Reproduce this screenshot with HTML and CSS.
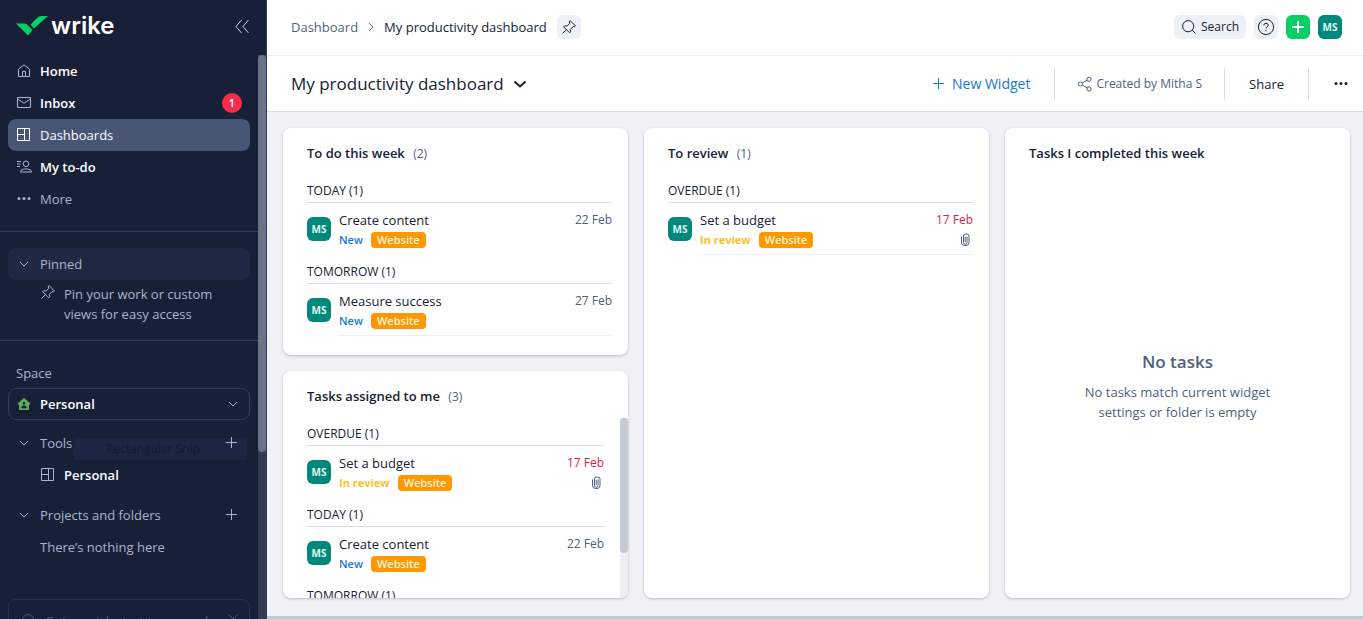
FILE: index.html
```html
<!DOCTYPE html>
<html lang="en">
<head>
<meta charset="utf-8">
<title>My productivity dashboard</title>
<link rel="stylesheet" href="styles.css">
</head>
<body>
<svg class="sprite" aria-hidden="true">
  <symbol id="chevron" viewBox="0 0 16 16"><path d="M4 6l4 4 4-4"/></symbol>
  <symbol id="chevron-bold" viewBox="0 0 16 16"><path d="M2.500 5.500l5.500 5 5.500-5"/></symbol>
  <symbol id="plus" viewBox="0 0 16 16"><path d="M7.500 2v11M2 7.500h11"/></symbol>
  <symbol id="plus-bold" viewBox="0 0 16 16"><path d="M8 2v12M2 8h12"/></symbol>
  <symbol id="board" viewBox="0 0 16 16"><path d="M1.500 1.500h12v12h-12zM8.500 1.500v12M1.500 7.500h7"/></symbol>
  <symbol id="pin" viewBox="0 0 16 16"><path d="M9 1.500L14.500 7l-1.200.9-1.200-.3-2.700 2.700.2 2.500-1 1-6-6 1-1 2.500.2 2.700-2.700-.6-1.500zM5.400 10.600L1.500 14.500"/></symbol>
  <symbol id="dots" viewBox="0 0 16 16"><g fill="currentColor" stroke="none"><circle cx="3" cy="7.500" r="1.500"/><circle cx="8" cy="7.500" r="1.500"/><circle cx="13" cy="7.500" r="1.500"/></g></symbol>
  <symbol id="search" viewBox="0 0 16 16"><circle cx="7.200" cy="7.200" r="5.600"/><path d="M11.200 11.200l3.300 3.300"/></symbol>
  <symbol id="clip" viewBox="0 0 16 16"><path d="M10 4.500v6a1.500 1.500 0 0 1-3.500 0V4a2 2 0 0 1 1.700-2h1.600a2.200 2.200 0 0 1 2.200 2v6.500a3 3 0 0 1-3 3h-1.500a3 3 0 0 1-3-3V4.500M8.200 5v5"/></symbol>
</svg>
<div class="app">
  <aside class="sidebar">
    <header class="brand">
      <a class="logo" href="#" aria-label="wrike">
        <svg class="logo-mark" viewBox="0 0 32 20"><path d="M0 7.500h8.500q1.500 0 2.500 1l5.500 5.500-4.500 5.500zM14.500 8.500L21 2Q23 0 25.500 0H32L18 12.500z"/></svg>
        <span>wrike</span>
      </a>
      <button class="collapse" aria-label="Collapse sidebar"><svg viewBox="0 0 16 16"><path d="M7.500 1L2 7.500 7.500 14M14.500 1L9 7.500l5.500 6.500"/></svg></button>
    </header>
    <div class="side-body">
      <div class="side-scroll">
        <nav class="nav">
          <a class="row strong" href="#"><svg viewBox="0 0 16 16"><path d="M2.500 13.500V6L8 2l5.500 4v7.500zM6.500 13.500v-5h3v5"/></svg>Home</a>
          <a class="row strong" href="#"><svg viewBox="0 0 16 16"><path d="M1.500 2.500h13v10h-13zM1.500 4L8 8.200 14.500 4"/></svg>Inbox<span class="count">1</span></a>
          <a class="row active" href="#"><svg><use href="#board"/></svg>Dashboards</a>
          <a class="row strong" href="#"><svg viewBox="0 0 16 16"><circle cx="10" cy="4.800" r="2.800"/><path d="M4.500 13q.5-3 4-3h3q3.500 0 4 3zM1 2.500h4M1 5h3.500M1 7.500h3"/></svg>My to-do</a>
          <a class="row" href="#"><svg><use href="#dots"/></svg>More</a>
        </nav>
        <section class="pinned">
          <button class="row pinned-head"><svg><use href="#chevron"/></svg>Pinned</button>
          <p class="pin-note"><svg><use href="#pin"/></svg><span>Pin your work or custom<br>views for easy access</span></p>
        </section>
        <section class="space">
          <h2>Space</h2>
          <button class="row strong picker"><svg class="house" viewBox="0 0 16 16"><path class="roof" d="M8 2l6.500 5.500-.8 1H13v5.500H3V8.500h-.7l-.8-1z"/><path class="person" d="M6.700 7.300a1.300 1.300 0 1 0 2.600 0 1.300 1.300 0 1 0-2.600 0M5.300 12.300q0-2.800 2.700-2.800t2.700 2.800z"/></svg>Personal<svg class="end"><use href="#chevron"/></svg></button>
          <div class="row tools"><svg><use href="#chevron"/></svg>Tools
            <span class="ghost" aria-hidden="true">Rectangular Snip</span>
            <button class="add" aria-label="Add tool"><svg><use href="#plus"/></svg></button></div>
          <a class="row strong nested" href="#"><svg><use href="#board"/></svg>Personal</a>
          <div class="row projects"><svg><use href="#chevron"/></svg>Projects and folders
            <button class="add" aria-label="Add project"><svg><use href="#plus"/></svg></button></div>
          <p class="row empty-row">There’s nothing here</p>
        </section>
        <div class="tip"><svg><use href="#search"/></svg><span>Get a quick start to expand</span><button aria-label="Dismiss"><svg viewBox="0 0 16 16"><path d="M3.500 1.500l9 9M12.500 1.500l-9 9"/></svg></button></div>
      </div>
      <div class="side-track"><div class="side-thumb"></div></div>
    </div>
  </aside>
  <main class="main">
    <header class="topbar">
      <nav class="crumbs"><a href="#">Dashboard</a><svg class="sep"><use href="#chevron"/></svg><span>My productivity dashboard</span></nav>
      <button class="chip" aria-label="Pin"><svg><use href="#pin"/></svg></button>
      <div class="top-actions">
        <button class="chip search"><svg><use href="#search"/></svg>Search</button>
        <button class="chip help" aria-label="Help"><svg viewBox="0 0 18 18"><circle cx="9" cy="9" r="7.600"/><path d="M6.800 7.300q0-2 2.200-2t2.200 1.800q0 1.200-1.200 1.800-1 .5-1 1.500M9 12v1.300"/></svg></button>
        <button class="chip create" aria-label="Create"><svg><use href="#plus-bold"/></svg></button>
        <button class="avatar">MS</button>
      </div>
    </header>
    <header class="titlebar">
      <h1>My productivity dashboard</h1>
      <button class="title-menu" aria-label="Dashboard menu"><svg><use href="#chevron-bold"/></svg></button>
      <div class="tools-right">
        <button class="new-widget"><svg><use href="#plus"/></svg>New Widget</button>
        <button class="created"><svg viewBox="0 0 16 16"><circle cx="3.300" cy="8" r="2.100"/><circle cx="12" cy="3.300" r="2.100"/><circle cx="12" cy="13" r="2.100"/><path d="M5.200 7l5-2.800M5.200 9l5 3"/></svg>Created by Mitha S</button>
        <button class="share">Share</button>
        <button class="more" aria-label="More"><svg><use href="#dots"/></svg></button>
      </div>
    </header>
    <div class="board">
      <div class="column">
        <section class="card">
          <h2>To do this week <small>(2)</small></h2>
          <h3>TODAY (1)</h3>
          <article class="task"><span class="avatar">MS</span><div class="info"><div class="line"><span class="name">Create content</span><time>22 Feb</time></div><div class="line"><b class="new">New</b><span class="tag">Website</span></div></div></article>
          <h3>TOMORROW (1)</h3>
          <article class="task ruled"><span class="avatar">MS</span><div class="info"><div class="line"><span class="name">Measure success</span><time>27 Feb</time></div><div class="line"><b class="new">New</b><span class="tag">Website</span></div></div></article>
        </section>
        <section class="card assigned">
          <h2>Tasks assigned to me <small>(3)</small></h2>
          <div class="scroll">
            <div class="list">
              <h3>OVERDUE (1)</h3>
              <article class="task"><span class="avatar">MS</span><div class="info"><div class="line"><span class="name">Set a budget</span><time class="late">17 Feb</time></div><div class="line"><b class="review">In review</b><span class="tag">Website</span><svg class="clip"><use href="#clip"/></svg></div></div></article>
              <h3>TODAY (1)</h3>
              <article class="task"><span class="avatar">MS</span><div class="info"><div class="line"><span class="name">Create content</span><time>22 Feb</time></div><div class="line"><b class="new">New</b><span class="tag">Website</span></div></div></article>
              <h3>TOMORROW (1)</h3>
            </div>
            <div class="track"><div class="thumb"></div></div>
          </div>
        </section>
      </div>
      <section class="card">
        <h2>To review <small>(1)</small></h2>
        <h3>OVERDUE (1)</h3>
        <article class="task ruled"><span class="avatar">MS</span><div class="info"><div class="line"><span class="name">Set a budget</span><time class="late">17 Feb</time></div><div class="line"><b class="review">In review</b><span class="tag">Website</span><svg class="clip"><use href="#clip"/></svg></div></div></article>
      </section>
      <section class="card">
        <h2>Tasks I completed this week</h2>
        <div class="none"><strong>No tasks</strong><p>No tasks match current widget<br>settings or folder is empty</p></div>
      </section>
    </div>
    <div class="h-scroll"></div>
  </main>
</div>
</body>
</html>
```
FILE: styles.css
```css
* { box-sizing: border-box; }
body, h1, h2, h3, p { margin: 0; }
body { font: 13px/20px "Open Sans", "Noto Sans", sans-serif; color: #162136; }
button { font: inherit; color: inherit; background: none; border: 0; padding: 0; display: flex; align-items: center; justify-content: center; cursor: pointer; }
a { color: inherit; text-decoration: none; }
svg { width: 16px; height: 16px; flex: none; fill: none; stroke: currentColor; }
.sprite { display: none; }
.app { display: flex; height: 100vh; overflow: hidden; }

/* Sidebar */
.sidebar { width: 267px; flex: none; display: flex; flex-direction: column; background: #182038; color: #a9b4cd; border-right: 1px solid #2b3d6b; }
.brand { height: 55px; flex: none; display: flex; align-items: center; justify-content: space-between; padding: 0 16px 2px; }
.logo { display: flex; align-items: center; gap: 3px; color: #fff; font: 600 24px/32px "Inter", sans-serif; padding-bottom: 2px; }
.logo-mark { width: 32px; height: 20px; fill: #08cf65; stroke: none; }
.collapse { color: #c5cde0; }
.side-body { flex: 1; min-height: 0; display: flex; }
.side-scroll { flex: 1; min-width: 0; overflow: hidden; }
.side-track { width: 8px; background: #343b52; }
.side-thumb { height: 397px; border-radius: 4px; background: #6b7385; }
.nav { padding: 0 8px 16px; border-bottom: 1px solid #30405f; }
.row { display: flex; align-items: center; gap: 8px; width: 100%; height: 32px; padding: 0 8px; border-radius: 8px; justify-content: flex-start; position: relative; }
.strong { color: #fff; font-weight: 600; }
.row svg { color: #a9b4cd; }
.active { background: #475674; color: #fff; }
.active svg { color: #fff; }
.count { width: 20px; height: 20px; margin-left: auto; border-radius: 50%; background: #f62d4a; font-size: 11px; text-align: center; }
.pinned { padding: 16px 8px; border-bottom: 1px solid #30405f; }
.pinned-head { background: #202843; }
.pin-note { display: flex; gap: 8px; padding: 4px 0 0 32px; }
.space { padding: 22px 8px 36px; }
.space h2 { font: inherit; padding: 0 8px; margin-bottom: 5px; }
.picker { border: 1px solid #30405f; padding: 0 8px 0 7px; }
.row .end { margin-left: auto; }
.house { stroke: none; }
.roof { fill: #58ad5c; }
.person { fill: #182038; }
.tools { margin-top: 7px; }
.add { margin-left: auto; padding-right: 2px; position: relative; }
.ghost { position: absolute; left: 66px; right: 3px; top: 11px; height: 22px; padding-left: 32px; line-height: 22px; background: #1c2542; color: #121a2e; font-size: 12px; }
.nested { padding-left: 32px; }
.projects { margin-top: 8px; }
.empty-row { padding-left: 32px; }
.tip { display: flex; align-items: center; gap: 8px; height: 44px; margin: 0 8px; padding: 0 8px 0 12px; border: 1px solid #283551; border-radius: 8px; color: #4c566e; white-space: nowrap; }
.tip span { flex: 1; }

/* Header bars */
.main { flex: 1; min-width: 0; display: flex; flex-direction: column; background: #f0f1f5; }
.topbar { height: 56px; flex: none; display: flex; align-items: center; gap: 10px; padding: 0 21px 2px 24px; background: #fff; border-bottom: 1px solid #ebedf0; }
.crumbs { display: flex; align-items: center; gap: 5px; }
.crumbs a, small, time { color: #4f5f7f; }
.sep { transform: rotate(-90deg); color: #66728c; }
.chip { min-width: 24px; height: 24px; border-radius: 6px; background: #edf0f5; }
.top-actions { display: flex; gap: 8px; margin-left: auto; }
.search { gap: 4px; padding: 0 7px; font-size: 12px; }
.help svg { width: 18px; height: 18px; }
.create { background: #08cf65; color: #fff; stroke-width: 2px; }
.avatar { width: 24px; height: 24px; flex: none; border-radius: 6px; background: #00897b; color: #e2f5f2; font-size: 10px; font-weight: 700; line-height: 24px; text-align: center; }
.titlebar { height: 56px; flex: none; display: flex; align-items: center; gap: 8px; padding: 0 14px 0 24px; background: #fff; border-bottom: 1px solid #d8dee9; }
h1 { font-size: 17px; line-height: 24px; font-weight: 400; }
.title-menu { stroke-width: 2px; }
.tools-right { display: flex; align-items: center; margin-left: auto; }
.tools-right button { height: 32px; border-left: 1px solid #d8dee9; padding: 0 24px; gap: 5px; }
.tools-right .new-widget { border: 0; color: #1976d2; font-size: 14px; }
.tools-right .created { font-size: 12px; color: #4f5f7f; gap: 3px; padding: 0 22px; }
.tools-right .more { padding-right: 0; }

/* Widgets */
.board { flex: 1; min-height: 0; display: grid; grid-template-columns: repeat(3, 1fr); gap: 16px; padding: 16px 13px 18px 16px; }
.column { display: flex; flex-direction: column; gap: 16px; min-height: 0; }
.card { display: flex; flex-direction: column; background: #fff; border-radius: 8px; padding: 15px 16px 19px 24px; box-shadow: 0 1px 3px #b9bec9; overflow: hidden; }
.card h2 { font-size: 13px; line-height: 20px; font-weight: 600; margin-bottom: 15px; }
small { font-size: 12px; font-weight: 400; margin-left: 5px; }
h3 { font-size: 12px; line-height: 20px; font-weight: 400; height: 25px; padding-top: 2px; border-bottom: 1px solid #d8dee9; }
.card h3 { height: 24px; }
.task { display: flex; gap: 8px; height: 57px; padding-top: 7px; }
.task .avatar { margin-top: 7px; }
.info { flex: 1; min-width: 0; }
.line { display: flex; align-items: center; height: 20px; gap: 8px; }
time { margin-left: auto; font-size: 12px; }
.late { color: #df2348; }
.line b { font-size: 11px; font-weight: 600; }
.new { color: #1976d2; }
.line .review { color: #fbc02d; font-weight: 700; }
.tag { height: 16px; line-height: 16px; padding: 0 6px; border-radius: 4px; background: #ff9800; color: #fff3de; font-size: 11px; font-weight: 600; }
.clip { margin-left: auto; color: #4f5f7f; }
.ruled { height: 52px; }
.ruled .info { border-bottom: 1px solid #edeff2; }
.assigned { flex: 1; min-height: 0; padding: 15px 0 0 24px; }
.assigned h2 { margin-bottom: 11px; }
.scroll { flex: 1; min-height: 0; display: flex; justify-content: space-between; gap: 16px; }
.list { flex: 1; padding-top: 4px; }
.track { width: 8px; background: #eeeff1; }
.thumb { height: 135px; border-radius: 4px; background: #c5cad4; }
.none { flex: 1; display: flex; flex-direction: column; justify-content: center; align-items: center; gap: 8px; padding: 14px 8px 0 0; text-align: center; color: #4f5f7f; }
.none strong { font-size: 17px; line-height: 24px; font-weight: 600; }
.h-scroll { height: 3px; flex: none; background: #c1c8d1; }
```
